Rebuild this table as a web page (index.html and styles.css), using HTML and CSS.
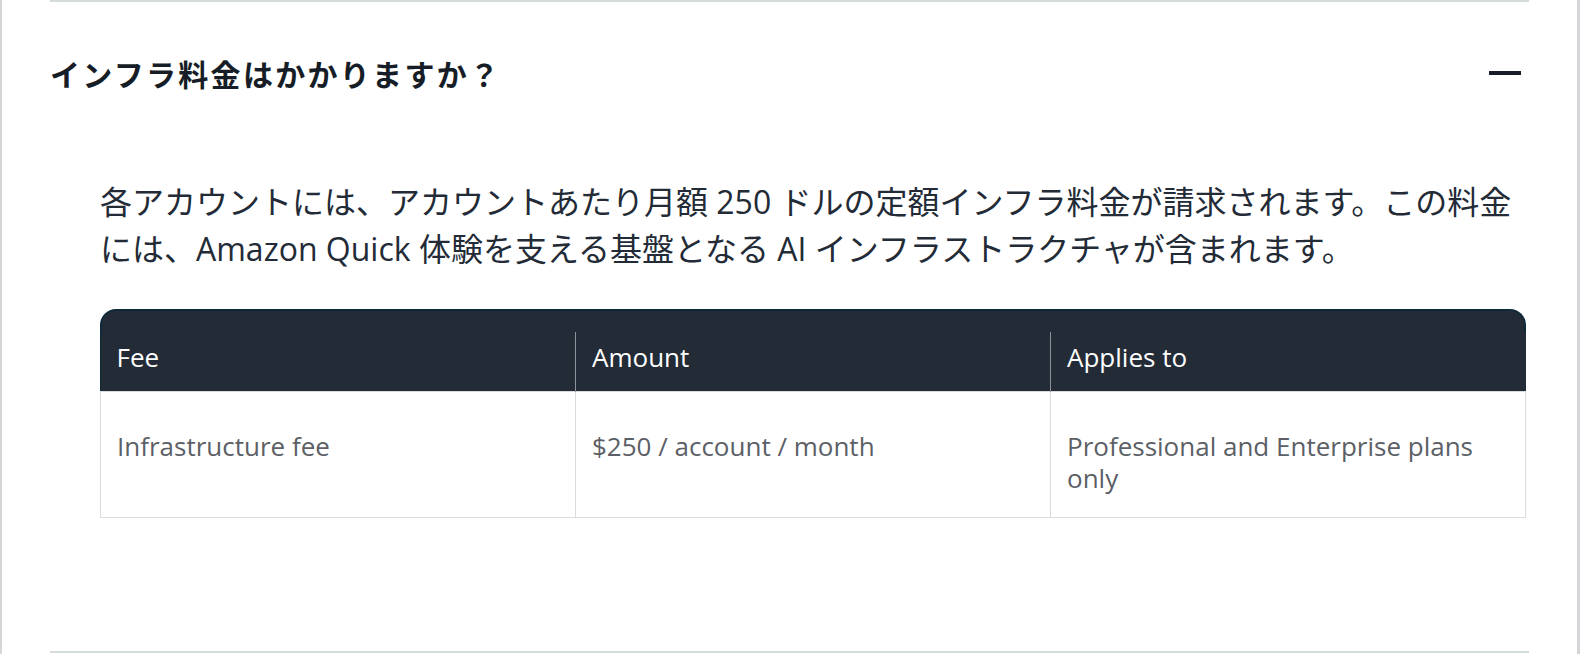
FILE: index.html
```html
<!DOCTYPE html>
<html lang="ja">
<head>
<meta charset="utf-8">
<title>FAQ</title>
<link rel="stylesheet" href="styles.css">
</head>
<body>
<section class="faq">
  <div class="faq-item">
    <div class="faq-head">
      <h3 class="faq-title">インフラ料金はかかりますか？</h3>
      <span class="minus" aria-hidden="true"></span>
    </div>
    <div class="faq-panel">
      <p class="faq-text">各アカウントには、アカウントあたり月額 250 ドルの定額インフラ料金が請求されます。この料金には、Amazon Quick 体験を支える基盤となる AI インフラストラクチャが含まれます。</p>
      <div class="table-wrap">
        <table class="fees">
          <thead>
            <tr><th>Fee</th><th>Amount</th><th>Applies to</th></tr>
          </thead>
          <tbody>
            <tr><td>Infrastructure fee</td><td>$250 / account / month</td><td>Professional and Enterprise plans only</td></tr>
          </tbody>
        </table>
      </div>
    </div>
  </div>
  <div class="faq-item next"></div>
</section>
</body>
</html>
```
FILE: styles.css
```css
html, body {
  margin: 0;
  padding: 0;
  background: #ffffff;
}
body {
  font-family: "Open Sans", "Noto Sans CJK JP", sans-serif;
  width: 1580px;
  height: 654px;
  overflow: hidden;
}
.faq {
  border-left: 2px solid #d5d5da;
  border-right: 3px solid #d5d5da;
  height: 654px;
  box-sizing: border-box;
}
.faq-item {
  margin: 0 48px 0 48px;
  border-top: 2px solid #d5dbdb;
}
.faq-item.next {
  height: 2px;
  border-top: 2px solid #d5dbdb;
}
.faq-head {
  display: flex;
  justify-content: space-between;
  align-items: center;
  padding: 51px 8px 0 0;
}
.faq-title {
  margin: 0;
  font-family: "Noto Sans CJK JP", sans-serif;
  font-weight: 700;
  font-size: 30px;
  line-height: 40px;
  color: #161d26;
  letter-spacing: 2.3px;
}
.minus {
  width: 32px;
  height: 4px;
  background: #161d26;
}
.faq-panel {
  padding: 0 3px 133px 50px;
}
.faq-text {
  margin: 85px 0 0 0;
  font-size: 32px;
  line-height: 47px;
  color: #232b37;
}
.table-wrap {
  margin-top: 37px;
  background: #232b37;
  border: 2px solid #0e2a3a;
  border-bottom: 0;
  border-radius: 16px 16px 0 0;
  padding-top: 21px;
}
.fees {
  width: calc(100% + 4px);
  margin: 0 -2px;
  border-collapse: collapse;
  table-layout: fixed;
  font-size: 26px;
  line-height: 32px;
}
.fees th {
  text-align: left;
  font-weight: 400;
  color: #ffffff;
  background: #232b37;
  padding: 9px 16px 18px 16px;
  border-left: 1px solid #8d939b;
}
.fees th:first-child {
  border-left: 0;
}
.fees td {
  vertical-align: top;
  background: #ffffff;
  color: #5c5f66;
  padding: 38px 16px 23px 16px;
  border: 1px solid #dcdcdf;
}
```
